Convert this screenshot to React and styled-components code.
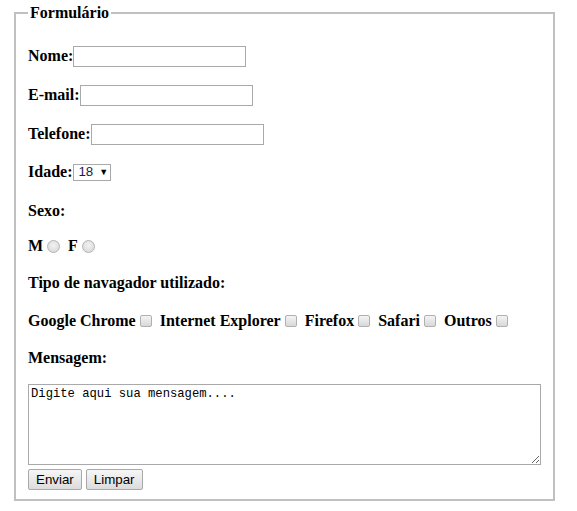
import React from "react";
import styled, { createGlobalStyle } from "styled-components";

const Global = createGlobalStyle`
  html, body { margin: 0; padding: 0; background: #fff; }
  body { font-family: "Liberation Serif", "Times New Roman", serif; font-size: 16px; color: #000; }
`;

const Page = styled.div`
  padding: 4px 0 0 14px;
`;

const Fieldset = styled.fieldset`
  margin: 0;
  width: 513px;
  padding: 5.6px 12px 9px;
  border: 2px solid #c0c0c0;
  min-width: 0;
`;

const Legend = styled.legend`
  padding: 0 2px;
  font-weight: bold;
  font-size: 16px;
  line-height: 18px;
`;

const Row = styled.p`
  margin: ${(p) => p.$mt}px 0 0;
  height: 18px;
  line-height: 18px;
  font-weight: bold;
  display: flex;
  align-items: center;
  white-space: nowrap;
`;

const Label = styled.label`
  font-weight: bold;
`;

const TextInput = styled.input`
  box-sizing: border-box;
  flex: none;
  width: 173px;
  height: 21px;
  border: 1px solid #a9a9a9;
  padding: 1px 2px;
  font-family: "Liberation Sans", Arial, sans-serif;
  font-size: 13.33px;
  margin: 1px 0 0;
  outline: none;
  background: #fff;
`;

const SelectBox = styled.span`
  box-sizing: border-box;
  display: inline-flex;
  align-items: center;
  height: 17px;
  width: 38px;
  border: 1px solid #a9a9a9;
  padding: 0 4px;
  font-family: "Liberation Sans", Arial, sans-serif;
  font-size: 13.33px;
  font-weight: normal;
  color: #1a1a5a;
  background: #fff;
  gap: 6px;
  margin-left: 1px;
`;

const Arrow = styled.span`
  font-size: 9px;
  color: #000;
`;

const Radio = styled.input`
  appearance: none;
  box-sizing: border-box;
  flex: none;
  width: 13px;
  height: 13px;
  border-radius: 50%;
  border: 1px solid #b4b4b4;
  background: radial-gradient(circle at 50% 40%, #f2f2f2, #d4d4d4);
  margin: 0 8px 0 4px;
`;

const Check = styled.input`
  appearance: none;
  box-sizing: border-box;
  flex: none;
  width: 12px;
  height: 12px;
  border-radius: 2px;
  border: 1px solid #b0b0b0;
  background: linear-gradient(#f4f4f4, #d8d8d8);
  margin: 0 8px 0 4px;
`;

const TextArea = styled.textarea`
  display: block;
  box-sizing: border-box;
  width: 513px;
  height: 81px;
  margin: 17px 0 0;
  border: 1px solid #a9a9a9;
  padding: 2px;
  font-family: "Liberation Mono", "DejaVu Sans Mono", monospace;
  font-size: 12.2px;
  line-height: 15px;
  color: #000;
  resize: both;
  outline: none;
`;

const Buttons = styled.div`
  display: flex;
  gap: 4px;
  margin-top: 4px;
`;

const Button = styled.button`
  box-sizing: border-box;
  height: 21px;
  padding: 0 7px;
  border: 1px solid #a9a9a9;
  border-radius: 2px;
  background: linear-gradient(#f6f6f6, #dcdcdc);
  font-family: "Liberation Sans", Arial, sans-serif;
  font-size: 13.33px;
  color: #000;
  margin: 0;
`;

const browsers = ["Google Chrome", "Internet Explorer", "Firefox", "Safari", "Outros"];

export default function App() {
  return (
    <>
      <Global />
      <Page>
        <form onSubmit={(e) => e.preventDefault()}>
          <Fieldset>
            <Legend>Formulário</Legend>
            <Row $mt={19}>
              <Label>Nome:</Label>
              <TextInput type="text" />
            </Row>
            <Row $mt={21}>
              <Label>E-mail:</Label>
              <TextInput type="text" />
            </Row>
            <Row $mt={21}>
              <Label>Telefone:</Label>
              <TextInput type="text" />
            </Row>
            <Row $mt={20.7}>
              <Label>Idade:</Label>
              <SelectBox>
                18 <Arrow>▼</Arrow>
              </SelectBox>
            </Row>
            <Row $mt={20.3}>Sexo:</Row>
            <Row $mt={17.7}>
              <Label>M</Label>
              <Radio type="radio" name="sexo" />
              <Label>F</Label>
              <Radio type="radio" name="sexo" />
            </Row>
            <Row $mt={18.6}>Tipo de navagador utilizado:</Row>
            <Row $mt={19.7}>
              {browsers.map((b) => (
                <React.Fragment key={b}>
                  <Label>{b}</Label>
                  <Check type="checkbox" />
                </React.Fragment>
              ))}
            </Row>
            <Row $mt={19}>Mensagem:</Row>
            <TextArea defaultValue="Digite aqui sua mensagem...." />
            <Buttons>
              <Button type="submit">Enviar</Button>
              <Button type="reset">Limpar</Button>
            </Buttons>
          </Fieldset>
        </form>
      </Page>
    </>
  );
}
